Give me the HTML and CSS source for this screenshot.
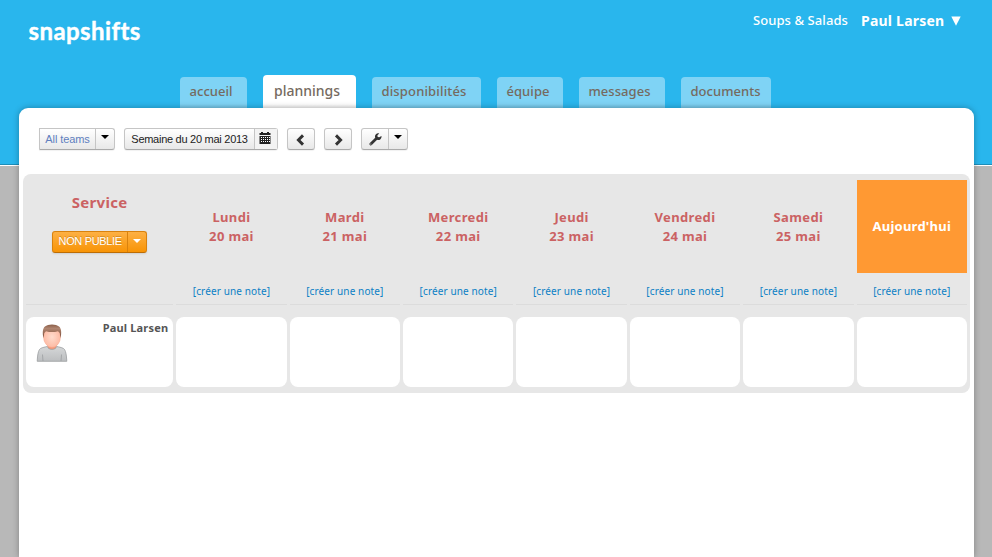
FILE: index.html
```
<!DOCTYPE html>
<html lang="fr">
<head>
<meta charset="utf-8">
<title>snapshifts – plannings</title>
<link rel="stylesheet" href="styles.css">
</head>
<body>
<div class="page">
  <header class="top">
    <div class="logo">snapshifts</div>
    <div class="account"><span class="company">Soups &amp; Salads</span><span class="user">Paul Larsen</span><svg class="tri" width="10" height="10" viewBox="0 0 10 10"><path d="M.3.5h9.4L5 9.8z" fill="#fff"/></svg></div>
  </header>
  <nav class="tabs">
    <a class="tab t1">accueil</a>
    <a class="tab active t2">plannings</a>
    <a class="tab t3">disponibilités</a>
    <a class="tab t4">équipe</a>
    <a class="tab t5">messages</a>
    <a class="tab t6">documents</a>
  </nav>
  <main class="sheet">
    <div class="toolbar">
      <div class="group teams"><span class="seg label">All teams</span><span class="seg drop"><svg width="8" height="4" viewBox="0 0 8 4"><path d="M0 0h8L4 4z"/></svg></span></div>
      <div class="group week"><span class="seg date">Semaine du 20 mai 2013</span><span class="seg cal"><svg width="12" height="12" viewBox="0 0 12 12"><path d="M.5 1H2V0h2v1h4V0h2v1h1.500v2H.5zM.5 4h11v8H.5z" fill="#222"/><path d="M2 5.500h9M2 7.500h9M2 9.500h9" stroke="#fff" stroke-width="1" stroke-dasharray="1 1"/></svg></span></div>
      <div class="group prev"><span class="seg arrow"><svg width="10" height="12" viewBox="0 0 10 12"><path d="M7 1.400 2.400 6 7 10.600" fill="none" stroke="#333" stroke-width="2.900"/></svg></span></div>
      <div class="group next"><span class="seg arrow"><svg width="10" height="12" viewBox="0 0 10 12"><path d="M3 1.400 7.600 6 3 10.600" fill="none" stroke="#333" stroke-width="2.900"/></svg></span></div>
      <div class="group tools"><span class="seg wrench"><svg width="13" height="13" viewBox="0 0 13 13"><path d="M10.300.6A3.200 3.200 0 0 0 6.200 4.700L.9 10a1.300 1.300 0 0 0 1.900 2L8.100 6.700A3.200 3.200 0 0 0 12.400 2.900L10.300 4.300 8.700 3.900 8.400 2.200z" fill="#333"/><circle cx="1.900" cy="11" r=".5" fill="#fff"/></svg></span><span class="seg drop"><svg width="8" height="4" viewBox="0 0 8 4"><path d="M0 0h8L4 4z"/></svg></span></div>
    </div>
    <section class="board">
      <div class="head service"><h2>Service</h2><div class="publish"><span class="state">NON PUBLIE</span><span class="caret"><svg width="8" height="4" viewBox="0 0 8 4"><path d="M0 0h8L4 4z" fill="#fff"/></svg></span></div></div>
      <div class="head"><div class="day">Lundi<br>20 mai</div><a class="note">[créer une note]</a></div>
      <div class="head"><div class="day">Mardi<br>21 mai</div><a class="note">[créer une note]</a></div>
      <div class="head"><div class="day">Mercredi<br>22 mai</div><a class="note">[créer une note]</a></div>
      <div class="head"><div class="day">Jeudi<br>23 mai</div><a class="note">[créer une note]</a></div>
      <div class="head"><div class="day">Vendredi<br>24 mai</div><a class="note">[créer une note]</a></div>
      <div class="head"><div class="day">Samedi<br>25 mai</div><a class="note">[créer une note]</a></div>
      <div class="head"><div class="day today">Aujourd'hui</div><a class="note">[créer une note]</a></div>
      <div class="cell person">
        <svg width="32" height="39" viewBox="0 0 32 39">
          <defs>
            <linearGradient id="shirt" x2="0" y2="1"><stop stop-color="#d5d7d8"/><stop offset="1" stop-color="#bcbec0"/></linearGradient>
            <radialGradient id="face"><stop stop-color="#ffdccd"/><stop offset="1" stop-color="#fdbba5"/></radialGradient>
            <linearGradient id="hair" x2="0" y2="1"><stop stop-color="#8a5e49"/><stop offset=".3" stop-color="#b08570"/><stop offset="1" stop-color="#7b4a35"/></linearGradient>
          </defs>
          <path d="M11.300 20h9.400v5.500L16 28l-4.700-2.500z" fill="#fa9877"/>
          <path d="M1.200 38.300c.3-6 1-11.300 3.300-12.800 2-1.200 5-1.500 6.800-2 1 3.800 8.400 3.800 9.400 0 1.800.5 4.800.8 6.800 2 2.300 1.500 3 6.800 3.300 12.800z" fill="url(#shirt)" stroke="#9a9da0" stroke-width=".8"/>
          <path d="M6.500 31.500 7 38M25.500 31.500 25 38" stroke="#9a9da0" stroke-width=".8" fill="none"/>
          <ellipse cx="16" cy="14" rx="8.500" ry="10.300" fill="url(#face)" stroke="#f9ab91" stroke-width=".5"/>
          <path d="M7.500 15C6.300 10 6.500 5.500 9 3.500c3-2.700 11-2.700 14 0 2.500 2 2.700 6.500 1.500 11.500l-.8-5-1.700-1.800c-4 1.200-8 1.200-12 0L8.300 10z" fill="url(#hair)"/>
        </svg>
        <span class="name">Paul Larsen</span>
      </div>
      <div class="cell"></div><div class="cell"></div><div class="cell"></div><div class="cell"></div><div class="cell"></div><div class="cell"></div><div class="cell"></div>
    </section>
  </main>
</div>
</body>
</html>
```

FILE: styles.css
```
* { box-sizing: border-box; }
body { margin: 0; font-family: "Noto Sans", "Open Sans", sans-serif; }
.page { height: 557px; overflow: hidden; display: flex; flex-direction: column; background: linear-gradient(#29b6ed 0 164px, #1e8db8 164px 165px, #fff 165px 166px, #b8b8b8 166px); }
.top { height: 75px; flex: none; display: flex; justify-content: space-between; align-items: flex-start; padding: 0 31px 0 28.500px; color: #fff; }
.logo { font: 700 24px/30px Lato, sans-serif; letter-spacing: .4px; margin-top: 16px; -webkit-text-stroke: .4px #fff; }
.account { display: flex; align-items: center; height: 20px; margin-top: 10px; white-space: nowrap; }
.company { font-size: 13px; font-weight: 500; width: 108px; letter-spacing: .08px; }
.user { font-size: 14px; font-weight: 700; width: 90px; letter-spacing: .22px; }
.tri { margin-top: 1px; }
.tabs { flex: none; height: 33px; display: flex; align-items: flex-end; gap: 16px; padding-left: 180px; color: #756a60; }
.tab { height: 31px; border-radius: 4px 4px 0 0; background: linear-gradient(#7fd3f5 27px, #72c3e4); font-size: 13px; line-height: 28px; font-weight: 500; padding-left: 9.500px; white-space: nowrap; letter-spacing: .05px; }
.active { height: 33px; background: linear-gradient(#fff 29px, #f0f0f0); font-size: 14px; line-height: 31px; padding-left: 11px; letter-spacing: 0; }
.t1 { width: 67px; }
.t2 { width: 93px; }
.t3 { width: 109px; letter-spacing: .15px; }
.t4 { width: 66px; }
.t5 { width: 86px; }
.t6 { width: 90px; }
.sheet { flex: 1; margin: 0 18px 0 19px; background: #fff; border-radius: 9px 9px 0 0; box-shadow: 0 0 6px rgba(0,0,0,.3); padding: 20px 4px 0; }
.toolbar { display: flex; height: 46px; align-items: flex-start; padding-left: 16px; font: 11px "Liberation Sans", sans-serif; color: #222; }
.group { display: flex; height: 22px; border: 1px solid #c5c5c5; border-bottom-color: #aaa; border-radius: 3px; background: linear-gradient(#fff, #e8e8e8); box-shadow: 0 1px 1px rgba(0,0,0,.06); white-space: nowrap; }
.seg { display: flex; align-items: center; justify-content: center; }
.seg + .seg { border-left: 1px solid #c5c5c5; }
.teams { width: 76px; margin-right: 9px; border-radius: 0 3px 3px 0; }
.label { width: 55px; color: #5f7fbf; letter-spacing: -.1px; }
.drop { flex: 1; padding-bottom: 4px; }
.week { width: 154px; margin-right: 9px; }
.date { width: 129px; letter-spacing: -.27px; }
.cal { flex: 1; background: #f3f3f3; padding-right: 3px; padding-bottom: 2px; }
.prev, .next { width: 28px; margin-right: 9px; }
.arrow { flex: 1; padding-top: 1px; }
.tools { width: 47px; }
.wrench { width: 26px; }
.board { height: 219px; border-radius: 8px; background: #e7e7e7; padding: 6px 3px; display: grid; grid-template-columns: 147.250px repeat(7, 1fr); grid-template-rows: 125px 70px; gap: 12px 3px; }
.head { border-bottom: 1px solid #dcdcdc; display: flex; flex-direction: column; align-items: center; text-align: center; color: #cb6263; }
.service h2 { margin: 11px 0 17px; font-size: 15px; line-height: 23px; font-weight: 700; letter-spacing: .3px; }
.publish { width: 95px; height: 22px; display: flex; border: 1px solid #d9820e; border-bottom-color: #bd6d05; border-radius: 3px; background: linear-gradient(#fdb044, #f89406); color: #fff; font: 11px/19px "Liberation Sans", sans-serif; text-shadow: 0 -1px 0 rgba(0,0,0,.2); box-shadow: 0 1px 2px rgba(0,0,0,.1); }
.state { width: 75px; border-right: 1px solid #d9820e; white-space: nowrap; letter-spacing: -.35px; }
.caret { flex: 1; display: flex; align-items: center; justify-content: center; padding-bottom: 3px; }
.day { width: 100%; height: 93px; display: flex; align-items: center; justify-content: center; font-size: 13px; line-height: 19px; font-weight: 700; letter-spacing: .35px; }
.today { background: #ff9933; color: #fff; letter-spacing: .25px; }
.note { margin-top: 9px; font-size: 10px; line-height: 18px; color: #0b80c5; white-space: nowrap; letter-spacing: .12px; }
.cell { background: #fff; border-radius: 8px; }
.person { display: flex; justify-content: space-between; padding: 6px 5px 0 10px; }
.name { font-size: 11px; line-height: 10px; font-weight: 700; color: #555; white-space: nowrap; letter-spacing: .18px; }
```
